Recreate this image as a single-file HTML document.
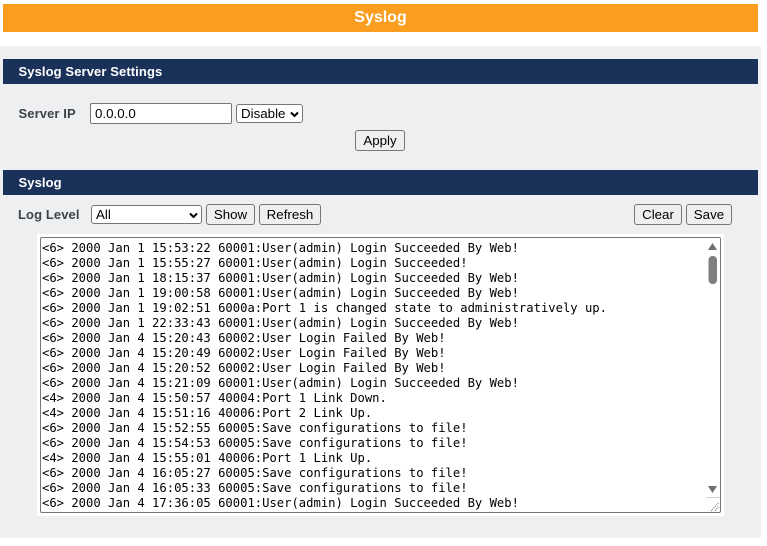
<!DOCTYPE html>
<html>
<head>
<meta charset="utf-8">
<style>
html,body{margin:0;padding:0;background:#fff;width:767px;height:546px;overflow:hidden;font-family:"Liberation Sans",sans-serif;}
.a{position:absolute;}
.bar{position:absolute;left:3px;width:755px;background:#1a3159;color:#fff;font-weight:bold;font-size:13px;box-sizing:border-box;padding-left:15.5px;letter-spacing:.1px;}
.lbl{position:absolute;color:#3f4246;font-weight:bold;font-size:13px;letter-spacing:.1px;white-space:nowrap;}
.btn{position:absolute;box-sizing:border-box;background:#efefef;border:1px solid #767676;border-radius:3px;color:#000;font-size:13.333px;text-align:center;white-space:nowrap;}
.sel{position:absolute;box-sizing:border-box;background:#fff;border:1px solid #767676;border-radius:3px;color:#000;font-size:13.333px;padding-left:4px;white-space:nowrap;}
.sel svg{position:absolute;right:3px;top:6px;}
pre{margin:0;position:absolute;left:42px;top:241px;font-family:"DejaVu Sans Mono",monospace;font-size:12.2px;line-height:15px;color:#000;white-space:pre;}
</style>
</head>
<body>
<div class="a" style="left:3px;top:4px;width:755px;height:28px;background:#fb9d1f;color:#fff;font-weight:bold;font-size:16px;line-height:28px;text-align:center;">Syslog</div>
<div class="a" style="left:0;top:46px;width:761px;height:492px;background:#eeeff1;"></div>

<div class="bar" style="top:59px;height:25px;line-height:25px;">Syslog Server Settings</div>
<div class="lbl" style="left:18.500px;top:106px;">Server IP</div>
<div class="a" style="left:90px;top:103px;width:142px;height:21px;box-sizing:border-box;background:#fff;border:1px solid #767676;border-radius:2px;font-size:13.333px;line-height:19px;padding-left:4px;color:#000;">0.0.0.0</div>
<div class="sel" style="left:236px;top:104px;width:67px;height:19px;line-height:17px;padding-left:4px;">Disable<svg width="9" height="7" viewBox="0 0 9 7"><path d="M1 1.500L4.500 5L8 1.500" fill="none" stroke="#000" stroke-width="2"/></svg></div>
<div class="btn" style="left:355px;top:130px;width:50px;height:21px;line-height:19px;">Apply</div>

<div class="bar" style="top:170px;height:25px;line-height:25px;">Syslog</div>
<div class="lbl" style="left:18px;top:207px;">Log Level</div>
<div class="sel" style="left:91px;top:205px;width:111px;height:19px;line-height:17px;">All<svg width="9" height="7" viewBox="0 0 9 7"><path d="M1 1.500L4.500 5L8 1.500" fill="none" stroke="#000" stroke-width="2"/></svg></div>
<div class="btn" style="left:206px;top:204px;width:49px;height:21px;line-height:19px;">Show</div>
<div class="btn" style="left:259px;top:204px;width:62px;height:21px;line-height:19px;">Refresh</div>
<div class="btn" style="left:634px;top:204px;width:48px;height:21px;line-height:19px;">Clear</div>
<div class="btn" style="left:686px;top:204px;width:46px;height:21px;line-height:19px;">Save</div>

<div class="a" style="left:37px;top:234px;width:687px;height:282px;background:#fff;"></div>
<div class="a" style="left:40px;top:237px;width:681px;height:276px;box-sizing:border-box;border:1px solid #767676;border-radius:2px;background:#fff;"></div>
<pre>&lt;6&gt; 2000 Jan 1 15:53:22 60001:User(admin) Login Succeeded By Web!
&lt;6&gt; 2000 Jan 1 15:55:27 60001:User(admin) Login Succeeded!
&lt;6&gt; 2000 Jan 1 18:15:37 60001:User(admin) Login Succeeded By Web!
&lt;6&gt; 2000 Jan 1 19:00:58 60001:User(admin) Login Succeeded By Web!
&lt;6&gt; 2000 Jan 1 19:02:51 6000a:Port 1 is changed state to administratively up.
&lt;6&gt; 2000 Jan 1 22:33:43 60001:User(admin) Login Succeeded By Web!
&lt;6&gt; 2000 Jan 4 15:20:43 60002:User Login Failed By Web!
&lt;6&gt; 2000 Jan 4 15:20:49 60002:User Login Failed By Web!
&lt;6&gt; 2000 Jan 4 15:20:52 60002:User Login Failed By Web!
&lt;6&gt; 2000 Jan 4 15:21:09 60001:User(admin) Login Succeeded By Web!
&lt;4&gt; 2000 Jan 4 15:50:57 40004:Port 1 Link Down.
&lt;4&gt; 2000 Jan 4 15:51:16 40006:Port 2 Link Up.
&lt;6&gt; 2000 Jan 4 15:52:55 60005:Save configurations to file!
&lt;6&gt; 2000 Jan 4 15:54:53 60005:Save configurations to file!
&lt;4&gt; 2000 Jan 4 15:55:01 40006:Port 1 Link Up.
&lt;6&gt; 2000 Jan 4 16:05:27 60005:Save configurations to file!
&lt;6&gt; 2000 Jan 4 16:05:33 60005:Save configurations to file!
&lt;6&gt; 2000 Jan 4 17:36:05 60001:User(admin) Login Succeeded By Web!</pre>
<svg class="a" style="left:706px;top:241px;" width="14" height="272" viewBox="0 0 14 272">
<path d="M6.500 2L11 9H2Z" fill="#707070"/>
<rect x="2.500" y="15" width="8.500" height="28" rx="4" fill="#7f7f7f"/>
<path d="M2 245H11L6.500 252Z" fill="#707070"/>
<path d="M-1 256.500H14M-.5 256V271" stroke="#d4d4d4" fill="none"/>
<path d="M12.500 262L5 270M12.500 266L9 270" stroke="#666" stroke-width="1" stroke-dasharray="1 1" fill="none"/>
</svg>
</body>
</html>
